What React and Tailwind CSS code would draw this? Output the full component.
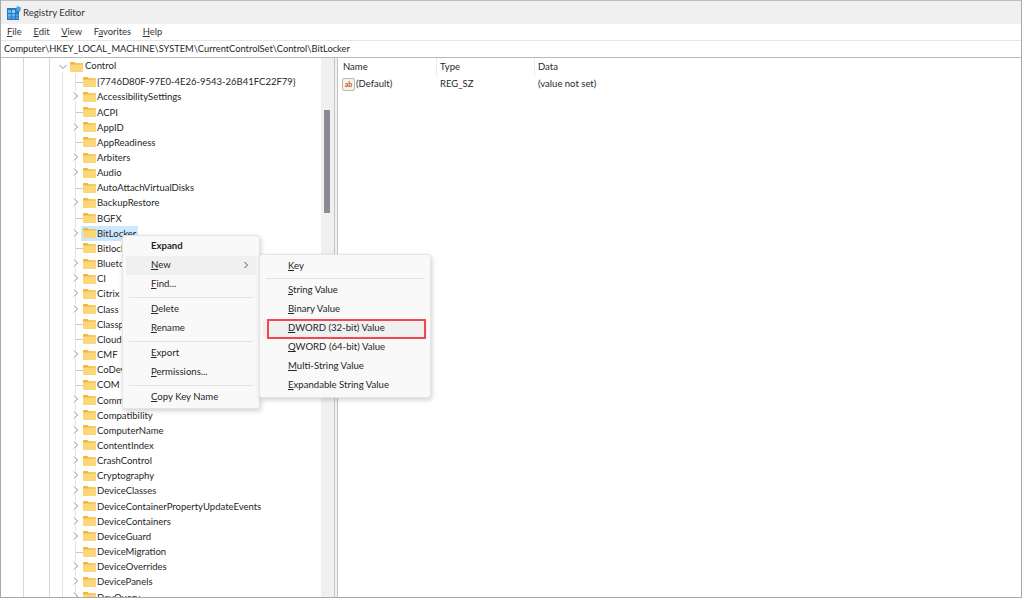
const F = "font-['Lato',sans-serif]";

const rows = [
  ["{7746D80F-97E0-4E26-9543-26B41FC22F79}", 0],
  ["AccessibilitySettings", 1],
  ["ACPI", 0],
  ["AppID", 1],
  ["AppReadiness", 0],
  ["Arbiters", 1],
  ["Audio", 1],
  ["AutoAttachVirtualDisks", 0],
  ["BackupRestore", 1],
  ["BGFX", 0],
  ["BitLocker", 1, true],
  ["BitlockerStatus", 0],
  ["Bluetooth", 1],
  ["CI", 1],
  ["Citrix", 1],
  ["Class", 1],
  ["Classpnp", 0],
  ["CloudDomainJoin", 0],
  ["CMF", 1],
  ["CoDeviceInstallers", 0],
  ["COM Name Arbiter", 0],
  ["CommonGlobUserSettings", 1],
  ["Compatibility", 1],
  ["ComputerName", 1],
  ["ContentIndex", 1],
  ["CrashControl", 1],
  ["Cryptography", 1],
  ["DeviceClasses", 1],
  ["DeviceContainerPropertyUpdateEvents", 1],
  ["DeviceContainers", 1],
  ["DeviceGuard", 1],
  ["DeviceMigration", 0],
  ["DeviceOverrides", 1],
  ["DevicePanels", 1],
  ["DevQuery", 1],
];

function Folder() {
  return (
    <svg width="13" height="10" viewBox="0 0 13 10" className="shrink-0">
      <path d="M0 1C0 .4.400 0 1 0h3.500l1.300 1.300h6.200c.6 0 1 .4 1 1V4H0z" fill="#f3b63a" />
      <path d="M0 2.600h13V9c0 .6-.4 1-1 1H1c-.6 0-1-.4-1-1z" fill="#fcd77a" />
    </svg>
  );
}

function Chevron({ down }) {
  return (
    <svg width="8" height="8" viewBox="0 0 8 8" className="shrink-0" fill="none" stroke="#8a8a8a" strokeWidth="1">
      <path d={down ? "M.5 2 4 5.500 7.500 2" : "M2 .5 5.500 4 2 7.500"} />
    </svg>
  );
}

function Row({ name, kids, selected }) {
  return (
    <div className="relative flex h-[15.17px] items-center pl-[80px]">
      {kids ? (
        <span className="absolute left-[71px] top-[3px] bg-white"><Chevron /></span>
      ) : (
        <div className="absolute left-[75px] top-1/2 h-px w-[7px] bg-[#c8c8c8]" />
      )}
      <div className={`relative flex h-[15px] items-center pl-[2px] pr-[2px] ${selected ? "bg-[#cce8ff]" : ""}`}>
        <Folder />
        <span className={`whitespace-nowrap pl-[1px] text-[9.5px] leading-[15px] text-[#262626] ${F}`}>{name}</span>
      </div>
    </div>
  );
}

function MenuItem({ u, rest, bold, hover, arrow }) {
  return (
    <div className={`relative mx-[3px] flex h-[19px] items-center rounded-[2px] pb-[0.5px] pl-[25px] text-[9.6px] text-[#262626] ${F} ${hover ? "bg-[#f0f0f0]" : ""} ${bold ? "font-bold" : ""}`}>
      <span className="whitespace-nowrap"><span className={u ? "underline" : ""}>{u}</span>{rest}</span>
      {arrow ? (
        <span className="absolute right-[6px] top-[5px]">
          <svg width="8" height="8" viewBox="0 0 8 8" fill="none" stroke="#555" strokeWidth="1"><path d="M2.500 1 5.500 4 2.500 7" /></svg>
        </span>
      ) : null}
    </div>
  );
}

export default function App() {
  return (
    <div className={`relative h-[600px] w-[1024px] overflow-hidden bg-white ${F}`}>
      <div className="flex h-[598px] w-[1022px] flex-col border-l border-r border-b border-[#a8a8a8]">
        <div className="flex h-[24px] shrink-0 items-center gap-[2px] border-t border-[#bdbdbd] bg-[#f0f0f0] pl-[6px]">
          <svg width="14" height="14" viewBox="0 0 14 14" className="shrink-0">
            <rect x="0" y="2" width="12" height="12" fill="#2a78c0" />
            <rect x="1" y="4" width="3" height="3" fill="#6ab8ea" />
            <rect x="5" y="4" width="3" height="3" fill="#8fd0f4" />
            <rect x="1" y="8" width="3" height="2.500" fill="#6ab8ea" />
            <rect x="5" y="8" width="3" height="2.500" fill="#6ab8ea" />
            <rect x="1" y="11" width="3" height="2" fill="#4a9bd8" />
            <rect x="5" y="11" width="3" height="2" fill="#4a9bd8" />
            <rect x="9" y="8" width="2.500" height="2.500" fill="#4a9bd8" />
            <rect x="9" y="11" width="2.500" height="2" fill="#4a9bd8" />
            <path d="M10 0 14 1.500 13 6 9 4.500z" fill="#39a8e0" />
          </svg>
          <span className="text-[9.6px] leading-none text-[#333]">Registry Editor</span>
        </div>
        <div className="flex h-[16px] shrink-0 items-center gap-[11.7px] bg-white pl-[6px] text-[9.4px] text-[#333]">
          <span><span className="underline">F</span>ile</span>
          <span><span className="underline">E</span>dit</span>
          <span><span className="underline">V</span>iew</span>
          <span>F<span className="underline">a</span>vorites</span>
          <span><span className="underline">H</span>elp</span>
        </div>
        <div className="flex h-[18px] shrink-0 items-center border-t border-t-[#e6e6e6] border-b border-b-[#b8b8b8] bg-white pl-[3px] text-[9.3px] text-[#262626]">
          Computer\HKEY_LOCAL_MACHINE\SYSTEM\CurrentControlSet\Control\BitLocker
        </div>
        <div className="flex min-h-0 flex-1">
          <div className="relative w-[321px] shrink-0 overflow-hidden pt-[1px] -ml-px pl-px">
            <div className="absolute bottom-0 left-[23px] top-0 w-px bg-[#d8d8d8]" />
            <div className="absolute bottom-0 left-[49px] top-0 w-px bg-[#d8d8d8]" />
            <div className="absolute bottom-0 left-[62px] top-[14px] w-px bg-[#e2e2e2]" />
            <div className="absolute bottom-0 left-[75px] top-[16px] w-px bg-[#e2e2e2]" />
            <div className="relative flex h-[15.17px] items-center pl-[58px]">
              <span className="mr-[3px] bg-white"><Chevron down /></span>
              <Folder />
              <span className="pl-[2px] text-[9.5px] text-[#262626]">Control</span>
            </div>
            {rows.map(([n, k, s]) => <Row key={n} name={n} kids={k} selected={s} />)}
          </div>
          <div className="flex w-[13px] shrink-0 flex-col bg-[#f0f0f0] pt-[52px] pl-[3px]">
            <div className="h-[103px] w-[6px] bg-[#8b8b93]" />
          </div>
          <div className="w-[4px] shrink-0 border-x border-[#c4c4c4] bg-[#f2f2f2]" />
          <div className="flex-1 text-[9.5px] text-[#262626]">
            <div className="flex h-[18px] items-center pl-[5px]">
              <span className="h-full w-[94px] border-r border-[#ececec] leading-[18px]">Name</span>
              <span className="h-full w-[98px] border-r border-[#ececec] pl-[3px] leading-[18px]">Type</span>
              <span className="pl-[3px]">Data</span>
            </div>
            <div className="flex h-[16px] items-center pl-[4px]">
              <span className="flex w-[98px] items-center">
                <span className="mr-[1px] flex h-[13px] w-[13px] shrink-0 items-center justify-center rounded-[2px] border border-[#b8b8b8] bg-[#f7f3ea] text-[7px] font-bold leading-none text-[#c0561c]">ab</span>
                (Default)
              </span>
              <span className="w-[98px]">REG_SZ</span>
              <span>(value not set)</span>
            </div>
          </div>
        </div>
      </div>

      <div className="absolute left-[122px] top-[235px] w-[138px] rounded-[3px] border border-[#e4e4e4] bg-[#f9f9f9] py-[1px] shadow-[1px_2px_5px_rgba(0,0,0,0.18)]">
        <MenuItem rest="Expand" bold />
        <MenuItem u="N" rest="ew" hover arrow />
        <MenuItem u="F" rest="ind..." />
        <div className="mx-[6px] my-[2.5px] h-px bg-[#e3e3e3]" />
        <MenuItem u="D" rest="elete" />
        <MenuItem u="R" rest="ename" />
        <div className="mx-[6px] my-[2.5px] h-px bg-[#e3e3e3]" />
        <MenuItem u="E" rest="xport" />
        <MenuItem u="P" rest="ermissions..." />
        <div className="mx-[6px] my-[2.5px] h-px bg-[#e3e3e3]" />
        <MenuItem u="C" rest="opy Key Name" />
      </div>

      <div className="absolute left-[259px] top-[254px] w-[172px] rounded-[3px] border border-[#e4e4e4] bg-[#f9f9f9] py-[2px] shadow-[1px_2px_5px_rgba(0,0,0,0.18)]">
        <MenuItem u="K" rest="ey" />
        <div className="mx-[6px] my-[2px] h-px bg-[#e3e3e3]" />
        <MenuItem u="S" rest="tring Value" />
        <MenuItem u="B" rest="inary Value" />
        <div className="relative">
          <MenuItem u="D" rest="WORD (32-bit) Value" hover />
          <div className="absolute -top-[0.5px] bottom-[-0.5px] left-[7px] right-[4px] border-2 border-[#f0484e]" />
        </div>
        <MenuItem u="Q" rest="WORD (64-bit) Value" />
        <MenuItem u="M" rest="ulti-String Value" />
        <MenuItem u="E" rest="xpandable String Value" />
      </div>
    </div>
  );
}
